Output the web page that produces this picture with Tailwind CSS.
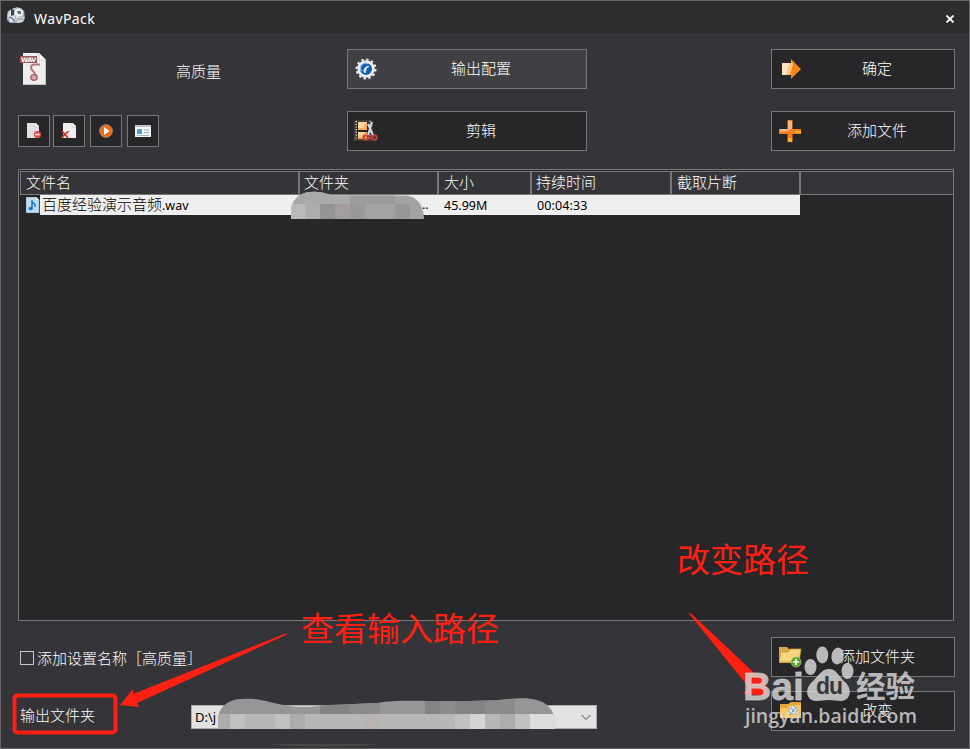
<!DOCTYPE html>
<html lang="zh-CN">
<head>
  <meta charset="UTF-8" />
  <title>WavPack</title>
  <script src="https://cdn.jsdelivr.net/npm/@tailwindcss/browser@4"></script>
</head>
<body class="bg-[#353438]">
<div class="relative flex h-[749px] w-[970px] flex-col overflow-hidden border border-[#68686a] bg-[#353438] font-['Open_Sans','Noto_Sans_CJK_SC',sans-serif] text-[15px] font-light leading-none text-white">

  <!-- title bar -->
  <header class="flex h-8 shrink-0 items-center bg-[#2d2d2f] pl-[5px] pr-[13px]">
    <svg class="-mt-1 mr-2 h-5 w-5" viewBox="0 0 20 20">
      <path d="M1 10l1-4 4-2 5-2 5 2 2 4 1 5-2 4-5 1H4l-3-3z" fill="#a9b0b7" />
      <path d="M2 11l1-4 5-4 2 3-2 4 2 7H4z" fill="#dfe5ea" />
      <path d="M5 4l4 1-1 5-3 1z" fill="#36475d" />
      <path d="M9 4l6-1 3 4-2 4-6 1-2-4z" fill="#eceff1" />
      <path d="M11 6h4v3h-3z" fill="#65717c" />
      <path d="M10 12h8l-1 5-6 1z" fill="#d5d8da" />
      <path d="M3 12l3 1 3 4" fill="none" stroke="#6583a3" stroke-width="1.4" />
      <path d="M14 3l4 3v4M11 14h6" fill="none" stroke="#858e96" />
    </svg>
    <h1 class="pt-1 font-['Noto_Sans',sans-serif] text-[14px] font-normal tracking-[0.4px]">WavPack</h1>
    <button class="ml-auto" aria-label="关闭">
      <svg class="mt-1 h-2 w-3" viewBox="0 0 12 8"><path d="M2.5.5l7 7M9.5.5l-7 7" stroke="#fff" stroke-width="1.8" /></svg>
    </button>
  </header>

  <!-- toolbar -->
  <section class="flex h-[136px] shrink-0 pl-[17px] pr-[14px] pt-4">
    <div class="w-[329px]">
      <div class="flex h-[66px] items-start">
        <svg class="mt-px h-9 w-8" viewBox="0 0 32 36">
          <path d="M5 3h16l7 7v25H5z" fill="#eeeeee" />
          <path d="M5 34.500h23M27.500 10v25" stroke="#c4c4c4" />
          <path d="M21 3v7h7z" fill="#fff" stroke="#bbb" stroke-width=".7" />
          <rect x="2" y="6" width="17" height="7" fill="#9b5555" />
          <text x="3" y="12" fill="#fff" font-family="DejaVu Sans" font-size="6.300" font-weight="bold" textLength="15">WAV</text>
          <path d="M22 14.500h-5c-3 0-4 1-4 3 0 3 5 5 5 9" fill="none" stroke="#b17878" stroke-width="2" />
          <ellipse cx="16" cy="27.500" rx="3.200" ry="2.800" fill="#dba9a9" stroke="#a65c5c" stroke-width="1.300" />
        </svg>
        <p class="ml-[126px] mt-[15px]">高质量</p>
      </div>
      <div class="flex">
        <button class="mr-[3px] flex h-8 w-8 items-center justify-center border border-[#79797a] bg-[#272729]">
          <svg class="h-4 w-4" viewBox="0 0 16 16">
            <path d="M1 0h9l3 3v12H1z" fill="#dfe0df" /><path d="M9 0v4h4" fill="#fff" stroke="#b9b9b9" stroke-width=".6" />
            <circle cx="11.500" cy="11.500" r="3.600" fill="#dd4940" /><path d="M9.300 11.500h4.400" stroke="#fff" stroke-width="1.600" />
          </svg>
        </button>
        <button class="mr-[5px] flex h-8 w-8 items-center justify-center border border-[#79797a] bg-[#272729]">
          <svg class="h-4 w-4" viewBox="0 0 16 16">
            <path d="M2 0h10l3 3v12H2z" fill="#efefef" /><path d="M11 0v4h4" fill="#fff" stroke="#b5b5b5" stroke-width=".6" />
            <path d="M1 8l6 7M7.500 8L.5 15" stroke="#d72b26" stroke-width="1.600" />
          </svg>
        </button>
        <button class="mr-[5px] flex h-8 w-8 items-center justify-center border border-[#79797a] bg-[#272729]">
          <svg class="h-4 w-4" viewBox="0 0 16 16"><circle cx="8" cy="8" r="6.300" fill="#ee6b16" stroke="#b79275" stroke-width=".9" /><path d="M6 4l5.500 4L6 12z" fill="#fff" /></svg>
        </button>
        <button class="flex h-8 w-8 items-center justify-center border border-[#79797a] bg-[#272729]">
          <svg class="h-4 w-4" viewBox="0 0 16 16">
            <path d="M0 2h16v12H0z" fill="#f3f5f6" /><path d="M0 2h16v2H0z" fill="#bdc5cf" />
            <rect x="2" y="6" width="5" height="5" rx="1" fill="#4b9fc7" /><path d="M9 7h5M9 9.500h5M2 12.500h12" stroke="#9db2c2" />
          </svg>
        </button>
      </div>
    </div>

    <div class="flex w-[240px] flex-col gap-[22px]">
      <button class="flex h-10 items-center border border-[#79797a] bg-[#403f43] pb-0.5 pl-1.5">
        <svg class="mt-0.5 h-6 w-6" viewBox="0 0 24 24">
          <circle cx="12" cy="12" r="9.500" fill="none" stroke="#e8e9ea" stroke-width="2" stroke-dasharray="2.480 2.480" />
          <circle cx="12" cy="12" r="7.400" fill="#155bb1" stroke="#f0f1f2" stroke-width="2.700" />
          <path d="M7.500 14a5 5 0 0 1 7-7" fill="none" stroke="#9ec8ed" stroke-width="1.300" />
          <path d="M10 15a4.500 4.500 0 0 1 5-5.500c-3 1-3.500 3-3.500 6z" fill="#e3eff9" stroke="#e3eff9" />
        </svg>
        <span class="flex-1 pr-0.5">输出配置</span>
      </button>
      <button class="flex h-10 items-center border border-[#79797a] bg-[#272729] pb-0.5 pl-1.5">
        <svg class="mt-0.5 h-6 w-6" viewBox="0 0 24 24">
          <rect x="1" y="2" width="17" height="19" fill="#2a2522" stroke="#8d7769" stroke-width=".6" />
          <path d="M4 3h9v8H4zM4 13h9v7H4z" fill="#f6aa5c" /><path d="M4 3h9l-4 6H4zM4 13h7l-4 5H4z" fill="#ffd39b" />
          <path d="M2.300 2v19M16 2v19" stroke="#ddd" stroke-width="1.300" stroke-dasharray="1.200 1.500" />
          <path d="M18 3l-4 13M14 5l5 11" stroke="#d2dce4" stroke-width="2" />
          <ellipse cx="12" cy="18.500" rx="2.500" ry="2" fill="none" stroke="#c8413c" stroke-width="1.900" />
          <ellipse cx="20.500" cy="18.500" rx="2.200" ry="2.300" fill="none" stroke="#c8413c" stroke-width="1.900" />
        </svg>
        <span class="flex-1 pr-0.5">剪辑</span>
      </button>
    </div>

    <div class="ml-auto flex w-[184px] flex-col gap-[22px]">
      <button class="flex h-10 items-center border border-[#79797a] bg-[#272729] pb-0.5 pl-1.5">
        <svg class="mt-0.5 h-6 w-6" viewBox="0 0 24 24">
          <path d="M4 6h9V2l10 10-10 10v-4H4z" fill="#f78514" /><path d="M4 6h10l-3 12H4z" fill="#fde5c4" /><path d="M13 4l2 3-3 11-4 0 3-12h2z" fill="#ffc481" />
        </svg>
        <span class="flex-1 pr-0.5">确定</span>
      </button>
      <button class="flex h-10 items-center border border-[#79797a] bg-[#272729] pb-0.5 pl-1.5">
        <svg class="mt-0.5 h-6 w-6" viewBox="0 0 24 24">
          <path d="M9.500 1h5v9H23v5h-8.500v8h-5v-8H1v-5h8.500z" fill="#f77e18" />
          <path d="M10 2h4v8q-4 3-12 3v-3h8z" fill="#f9b680" /><path d="M10 19h4v4h-4zM19 12h4v2h-7z" fill="#fbb42a" />
        </svg>
        <span class="flex-1 pr-0.5">添加文件</span>
      </button>
    </div>
  </section>

  <!-- file list -->
  <section class="ml-[17px] mr-[14px] h-[452px] w-[936px] shrink-0 border border-[#79797a] bg-[#272729] pl-px pt-px">
    <div class="flex h-6 border-y border-l border-[#79797a] bg-[#353438]">
      <div class="w-[279px] border-r-2 border-[#79797a] pl-[5px] pt-[3px]">文件名</div>
      <div class="w-[139px] border-r-2 border-[#79797a] pl-1 pt-[3px]">文件夹</div>
      <div class="w-[93px] border-r-2 border-[#79797a] pl-[5px] pt-[3px]">大小</div>
      <div class="w-[140px] border-r-2 border-[#79797a] pl-1 pt-[3px]">持续时间</div>
      <div class="w-[129px] border-r-2 border-[#79797a] pl-[5px] pt-[3px]">截取片断</div>
    </div>
    <div class="flex h-5 w-[780px] pl-1.5 font-['Noto_Sans','Noto_Sans_CJK_SC',sans-serif] text-black">
      <svg class="mt-0.5 h-4 w-3.5" viewBox="0 0 14 16">
        <path d="M0 0h10l3 3v13H0z" fill="#bddcf1" stroke="#7ba7c5" stroke-width=".7" /><path d="M10 0v3h3" fill="#f4faff" />
        <path d="M6 3v8M6 4c0 2 4 2 3 6" fill="none" stroke="#177bc5" stroke-width="1.500" /><ellipse cx="4.700" cy="11.500" rx="2.200" ry="1.700" fill="#177bc5" />
      </svg>
      <div class="flex flex-1 items-center bg-[#efefef] text-[12.500px] font-normal">
        <div class="w-[395px] whitespace-nowrap pl-0.5"><span class="text-[15px] font-light">百度经验演示音频</span>.wav</div>
        <div class="-ml-[13px] w-[22px]">..</div>
        <div class="w-[93px] pt-0.5">45.99M</div>
        <div class="pt-0.5 tracking-[0.1px]">00:04:33</div>
      </div>
    </div>
  </section>

  <!-- output options -->
  <footer class="flex flex-1 pl-[19px] pr-[14px] pt-4">
    <div class="w-[156px] shrink-0 whitespace-nowrap">
      <label class="flex h-[42px] items-center">
        <span class="mr-[3px] h-3.5 w-3.5 shrink-0 border border-[#c8c8c8]"></span>添加设置名称［高质量］
      </label>
      <p class="mt-[29px]">输出文件夹</p>
    </div>
    <div class="ml-[15px] mt-[68px] flex h-6 w-[406px] items-center border border-[#adadad] bg-[#e2e2e2] pl-[3px] pr-1 font-['Noto_Sans',sans-serif] text-[13px] font-normal text-black">
      D:\j
      <svg class="ml-auto h-3 w-3" viewBox="0 0 12 12"><path d="M1.500 4L6 8.500 10.500 4" fill="none" stroke="#444" /></svg>
    </div>
    <div class="ml-auto flex w-[184px] flex-col gap-[14px]">
      <button class="flex h-10 items-center border border-[#79797a] bg-[#272729] pb-0.5 pl-[7px]">
        <svg class="h-6 w-6" viewBox="0 0 24 24">
          <path d="M0 3h8l2 2h10v14H0z" fill="#d9ad4d" /><path d="M2 8h7l2-3h11l-2 13H0z" fill="#f5d77e" stroke="#c8973b" stroke-width=".8" />
          <circle cx="17" cy="18" r="5" fill="#55a725" stroke="#a6c782" stroke-width=".8" /><path d="M14 18h6M17 15v6" stroke="#fff" stroke-width="1.700" />
        </svg>
        <span class="flex-1 pr-0.5">添加文件夹</span>
      </button>
      <button class="flex h-10 items-center border border-[#79797a] bg-[#272729] pb-0.5 pl-[7px]">
        <svg class="mt-0.5 h-6 w-6" viewBox="0 0 24 24">
          <path d="M1 5h8l3-2h10v16H1z" fill="#e7a634" /><path d="M1 9h7l3-3h11v13H1z" fill="#f8c760" />
          <circle cx="14" cy="11" r="4" fill="#e1eaf0" stroke="#7894a5" stroke-dasharray="2 1" /><path d="M12 9l6 7M17 8l-6 8" stroke="#648aa5" />
        </svg>
        <span class="flex-1 pr-0.5">改变</span>
      </button>
    </div>
  </footer>

  <!-- blurred paths, notes and watermark lying over the window -->
  <svg class="pointer-events-none absolute -left-px -top-px h-[749px] w-[970px]" viewBox="0 0 970 749">
    <clipPath id="folder"><path d="M291 219v-7c0-12 9-20 20-20 12-1 16 3 25 3.500h68c13 0 20 10 20 23.500z" /></clipPath>
    <g clip-path="url(#folder)" shape-rendering="crispEdges">
      <path d="M290 190h135v30H290z" fill="#a3a2a4" />
      <path d="M290 190h60v14h-60z" fill="#aaaaab" /><path d="M290 204h15v15h-15z" fill="#bababb" />
      <path d="M305 204h15v15h-15z" fill="#adadae" /><path d="M320 204h15v15h-15z" fill="#949495" />
      <path d="M335 204h15v15h-15z" fill="#a39da2" /><path d="M350 204h15v15h-15z" fill="#99999a" />
      <path d="M350 190h45v14h-45z" fill="#9c9c9e" /><path d="M395 204h15v15h-15z" fill="#989699" />
    </g>
    <clipPath id="output"><path d="M218 729v-12c2-11 11-18 24-18 22-1 25 4 48 7 15 2 25 0 40-1 20-1 28-1 48-2 15-3 30-2 58-2 32 0 55 0 73-2 19-2 31 0 38 6 7 6 9 14 8 24z" /></clipPath>
    <g clip-path="url(#output)" shape-rendering="crispEdges">
      <path d="M215 695h345v19H215z" fill="#969597" />
      <path d="M320 695h30v19h-30zM425 695h60v19h-60z" fill="#848485" /><path d="M350 695h30v19h-30zM440 695h15v19h-15zM485 695h30v19h-30z" fill="#8b8b8c" />
      <path d="M215 714h345v16H215z" fill="#b8b7b8" />
      <path d="M215 714h15v16h-15zM290 714h15v16h-15zM500 714h15v16h-15z" fill="#adabae" />
      <path d="M230 714h15v16h-15zM275 714h15v16h-15zM455 714h15v16h-15zM515 714h15v16h-15z" fill="#c2c0c2" />
      <path d="M470 714h15v16h-15z" fill="#d4d4d4" /><path d="M530 714h30v16h-30z" fill="#dddddd" />
      <path d="M365 714h15v16h-15z" fill="#bbb3b1" />
    </g>
    <path d="M269 744h113c-20 3-85 4-113 0z" fill="#464647" />

    <g fill="#ff2013">
      <rect x="14.500" y="695.500" width="101" height="37" rx="3" fill="none" stroke="#ff2013" stroke-width="4" />
      <path d="M285.500 633.500q2 0 1 1.200L137 703l2 4-19-2 13-16v5z" />
      <path d="M689 613.500q1-1 2 0l68 64 4-4 5 23-25-3 6-6z" />
      <g font-family="Noto Sans CJK SC, sans-serif" font-weight="400" font-size="33">
        <text x="301" y="641">查看输入路径</text>
        <text x="677" y="572">改变路径</text>
      </g>
    </g>

    <g fill="#d8d8d8" fill-opacity=".83">
      <text x="743" y="699.500" font-family="Liberation Sans, sans-serif" font-weight="bold" font-size="39" stroke="#d8d8d8" stroke-opacity=".6" stroke-width=".8" textLength="61" lengthAdjust="spacingAndGlyphs">Bai</text>
      <ellipse cx="810.500" cy="667" rx="6" ry="8" /><ellipse cx="822.300" cy="655" rx="6" ry="8.500" />
      <ellipse cx="837.500" cy="656" rx="6" ry="8.500" transform="rotate(10 837.500 656)" /><ellipse cx="847.500" cy="671" rx="6" ry="8" />
      <path d="M829 669c8 0 10 8 16 13 7 6 7 18-4 19-5 0-8-1-12-1s-8 1-13 1c-11-1-11-13-4-19 6-5 9-13 17-13z" />
      <text x="856" y="697" font-family="Noto Sans CJK SC, sans-serif" font-weight="bold" font-size="29.500">经验</text>
      <text x="745" y="722.500" font-family="Open Sans, sans-serif" font-weight="600" font-size="20" textLength="172" lengthAdjust="spacingAndGlyphs">jingyan.baidu.com</text>
    </g>
    <text x="816" y="694" fill="#37363a" font-family="Liberation Sans, sans-serif" font-weight="bold" font-size="23" textLength="27">du</text>
  </svg>
</div>
</body>
</html>
